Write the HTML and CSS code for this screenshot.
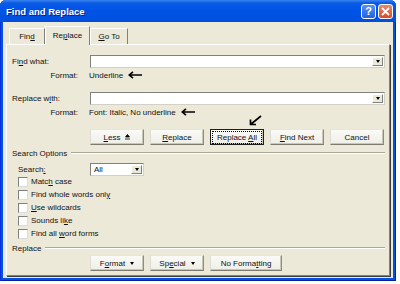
FILE: index.html
```html
<!DOCTYPE html>
<html>
<head>
	<meta charset="utf-8">
	<title>Find and Replace</title>
	<link rel="stylesheet" href="styles.css">
</head>
<body>

<div class="window">
	<div class="titlebar">
		<span class="title">Find and Replace</span>
		<div class="caption-buttons">
			<span class="cap help">?</span>
			<span class="cap close">
				<svg width="9" height="9" viewBox="0 0 9 9"><path d="M1 1 L8 8 M8 1 L1 8" stroke="#fff" stroke-width="1.8" fill="none"/></svg>
			</span>
		</div>
	</div>

	<div class="client">
		<div class="tabs">
			<span class="tab tab-find"><span>Fin<u>d</u></span></span>
			<span class="tab tab-replace selected"><span>Re<u>p</u>lace</span></span>
			<span class="tab tab-goto"><span><u>G</u>o To</span></span>
		</div>

		<div class="panel">
			<div class="field-row">
				<span class="label">Fi<u>n</u>d what:</span>
				<div class="combo"><span class="drop"></span></div>
			</div>
			<div class="format-row">
				<span class="format-label">Format:</span>
				<span class="format-value">Underline</span>
				<svg class="note-arrow" width="14" height="8" viewBox="0 0 14 8"><path d="M5 0.8 L1.2 4 L5 7.2 M1.2 4 H14" stroke="#000" stroke-width="1.6" fill="none"/></svg>
			</div>

			<div class="field-row second">
				<span class="label">Replace w<u>i</u>th:</span>
				<div class="combo"><span class="drop"></span></div>
			</div>
			<div class="format-row">
				<span class="format-label">Format:</span>
				<span class="format-value">Font: Italic, No underline</span>
				<svg class="note-arrow" width="14" height="8" viewBox="0 0 14 8"><path d="M5 0.8 L1.2 4 L5 7.2 M1.2 4 H14" stroke="#000" stroke-width="1.6" fill="none"/></svg>
			</div>

			<!-- annotation pointing at Replace All -->
			<svg class="pointer" width="13" height="11" viewBox="0 0 13 11"><path d="M12 1 L1.5 9.5 M1.5 4.5 L1.5 9.5 L7 9.5" stroke="#000" stroke-width="1.7" fill="none"/></svg>

			<div class="button-row">
				<span class="btn"><span><u>L</u>ess</span><svg class="less-icon" width="5" height="6" viewBox="0 0 5 6"><path d="M2.5 0.5 L4.5 3 L0.5 3 Z M0 5 H5" stroke="#000" stroke-width="0.8" fill="#000"/></svg></span>
				<span class="btn"><span><u>R</u>eplace</span></span>
				<span class="btn default"><span class="focus">Replace <u>A</u>ll</span></span>
				<span class="btn"><span><u>F</u>ind Next</span></span>
				<span class="btn"><span>Cancel</span></span>
			</div>

			<div class="group">Search Options</div>

			<div class="search-row">
				<span class="search-label">Search<u>:</u></span>
				<div class="combo small"><span class="combo-text">All</span><span class="drop"></span></div>
			</div>

			<div class="check"><span class="box"></span><span>Matc<u>h</u> case</span></div>
			<div class="check"><span class="box"></span><span>Find whole words onl<u>y</u></span></div>
			<div class="check"><span class="box"></span><span><u>U</u>se wildcards</span></div>
			<div class="check"><span class="box"></span><span>Sounds li<u>k</u>e</span></div>
			<div class="check"><span class="box"></span><span>Find all <u>w</u>ord forms</span></div>

			<div class="group">Replace</div>

			<div class="button-row bottom">
				<span class="btn"><span>F<u>o</u>rmat</span><span class="tri"></span></span>
				<span class="btn"><span>Sp<u>e</u>cial</span><span class="tri"></span></span>
				<span class="btn wide"><span>No Forma<u>t</u>ting</span></span>
			</div>
		</div>
	</div>
</div>

</body>
</html>
```

FILE: styles.css
```css
* {
	box-sizing: border-box;
}

body {
	margin: 0;
	background: #fff;
	font-family: "Liberation Sans", Arial, sans-serif;
	font-size: 8px;
	color: #111;
}

u {
	text-decoration: underline;
	text-underline-offset: 1px;
}

/* Window frame */
.window {
	width: 396px;
	height: 281px;
	background: #0052e0;
	border-radius: 6px 6px 0 0;
	display: flex;
	flex-direction: column;
	box-shadow: inset 1px 0 0 #0831d9, inset -1px 0 0 #001ea0, inset 0 -1px 0 #001ea0;
}

.titlebar {
	height: 22px;
	display: flex;
	align-items: center;
	justify-content: space-between;
	padding: 0 3px 0 6px;
	border-radius: 6px 6px 0 0;
	background: linear-gradient(#3a85f0 0, #0a5ae6 3px, #0054e6 10px, #0050e0 20px, #004cd8 22px);
}

.title {
	color: #fff;
	font-weight: bold;
	font-size: 9.5px;
	text-shadow: 1px 1px 0 #0a1e7a;
}

.caption-buttons {
	display: flex;
	gap: 2px;
}

.cap {
	width: 15px;
	height: 15px;
	border: 1px solid #fff;
	border-radius: 3px;
	display: flex;
	align-items: center;
	justify-content: center;
	color: #fff;
	font-weight: bold;
	font-size: 11px;
}

.help {
	background: linear-gradient(#5a8ff5, #2360e0);
}

.close {
	background: linear-gradient(#e88a6c, #d8492a);
}

/* Dialog body */
.client {
	flex: 1;
	margin: 0 3px 3px;
	background: #ece9d8;
	padding: 4px 3px 2px;
	display: flex;
	flex-direction: column;
}

.tabs {
	height: 18px;
	display: flex;
	align-items: flex-end;
	padding-left: 3px;
}

.tab {
	height: 16px;
	border: 1px solid;
	border-color: #fff #808080 transparent #fff;
	border-bottom: none;
	display: flex;
	align-items: center;
	justify-content: center;
}

.tab-find {
	width: 36px;
}

.tab-replace {
	width: 45px;
}

.tab-goto {
	width: 38px;
}

.selected {
	height: 19px;
	margin-bottom: -1px;
	background: #ece9d8;
	position: relative;
	z-index: 1;
	padding-bottom: 2px;
}

.panel {
	flex: 1;
	position: relative;
	border: 1px solid;
	border-color: #fff #808080 #808080 #fff;
	box-shadow: 1px 1px 0 #404040;
	padding: 10px 4px 0 5px;
}

/* Find / replace fields */
.field-row {
	display: flex;
	align-items: center;
	height: 13px;
}

.field-row.second {
	margin-top: 11px;
}

.label {
	width: 78px;
}

.combo {
	flex: 1;
	height: 13px;
	background: #fff;
	border: 1px solid;
	border-color: #808080 #d4d0c8 #d4d0c8 #808080;
	padding: 1px;
	display: flex;
	align-items: stretch;
	justify-content: flex-end;
}

.combo.small {
	flex: none;
	width: 54px;
	justify-content: space-between;
}

.combo-text {
	padding-left: 2px;
	line-height: 9px;
}

.drop {
	width: 11px;
	background: #ece9d8;
	border: 1px solid;
	border-color: #fff #808080 #808080 #fff;
	display: flex;
	align-items: center;
	justify-content: center;
}

.drop::after,
.tri {
	content: "";
	display: inline-block;
	width: 0;
	height: 0;
	border-left: 2.5px solid transparent;
	border-right: 2.5px solid transparent;
	border-top: 3px solid #000;
}

.format-row {
	display: flex;
	align-items: center;
	height: 12px;
	margin-top: 1px;
}

.format-label {
	width: 66px;
	text-align: right;
}

.format-value {
	margin-left: 11px;
}

.note-arrow {
	margin-left: 5px;
}

.pointer {
	position: absolute;
	left: 242px;
	top: 70px;
}

/* Buttons */
.button-row {
	display: flex;
	gap: 6px;
	padding-left: 78px;
	margin-top: 11px;
}

.button-row.bottom {
	margin-top: 1px;
}

.btn {
	width: 54px;
	height: 16px;
	display: flex;
	align-items: center;
	justify-content: center;
	gap: 5px;
	background: linear-gradient(#fafaf7, #efeee7);
	border: 1px solid;
	border-color: #e6e5de #8f8d80 #7d7b70 #dddcd4;
	box-shadow: inset -1px -1px 0 #c8c6b8;
}

.btn.wide {
	width: 72px;
}

.btn.default {
	border-color: #1e1e1e;
}

.focus {
	outline: 1px dotted #000;
	outline-offset: 1px;
	padding: 0 3px;
}

/* Group headers */
.group {
	display: flex;
	align-items: center;
	gap: 4px;
	height: 12px;
	margin-top: 2px;
}

.group::after {
	content: "";
	flex: 1;
	border-top: 1px solid #aca899;
	border-bottom: 1px solid #fff;
}

.search-row {
	display: flex;
	align-items: center;
	height: 12px;
	margin-top: 4px;
	padding-left: 6px;
}

.search-label {
	width: 72px;
}

.check {
	display: flex;
	align-items: center;
	gap: 3px;
	height: 13px;
	padding-left: 6px;
}

.box {
	width: 10px;
	height: 10px;
	background: #fff;
	border: 1px solid;
	border-color: #808080 #dcdcdc #dcdcdc #808080;
}
```
